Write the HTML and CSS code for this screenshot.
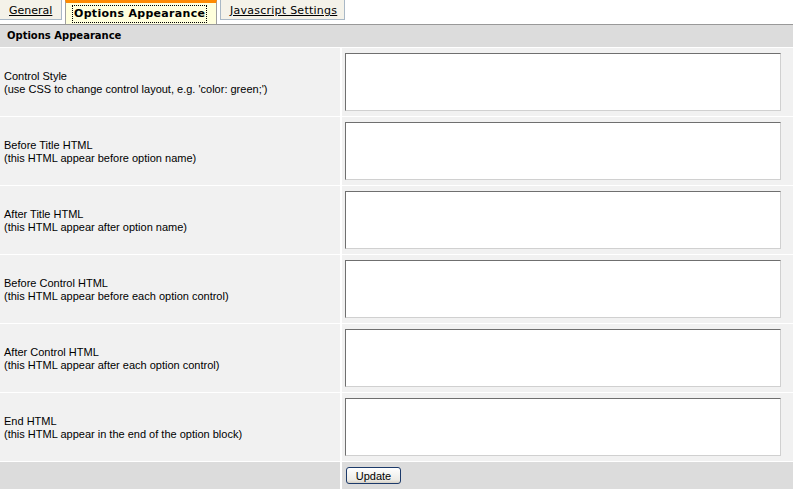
FILE: index.html
```html
<!DOCTYPE html>
<html>
<head>
<meta charset="utf-8">
<link rel="stylesheet" href="styles.css">
</head>
<body>
<div class="tabs">
  <a class="tab" href="#">General</a>
  <a class="tab active" href="#"><span class="focus">Options Appearance</span></a>
  <a class="tab" href="#">Javascript Settings</a>
</div>
<div class="panel">
  <div class="head">Options Appearance</div>
  <div class="row">
    <div class="label">Control Style<br>(use CSS to change control layout, e.g. 'color: green;')</div>
    <div class="field"><textarea class="area"></textarea></div>
  </div>
  <div class="row">
    <div class="label">Before Title HTML<br>(this HTML appear before option name)</div>
    <div class="field"><textarea class="area"></textarea></div>
  </div>
  <div class="row">
    <div class="label">After Title HTML<br>(this HTML appear after option name)</div>
    <div class="field"><textarea class="area"></textarea></div>
  </div>
  <div class="row">
    <div class="label">Before Control HTML<br>(this HTML appear before each option control)</div>
    <div class="field"><textarea class="area"></textarea></div>
  </div>
  <div class="row">
    <div class="label">After Control HTML<br>(this HTML appear after each option control)</div>
    <div class="field"><textarea class="area"></textarea></div>
  </div>
  <div class="row">
    <div class="label">End HTML<br>(this HTML appear in the end of the option block)</div>
    <div class="field"><textarea class="area"></textarea></div>
  </div>
  <div class="row foot">
    <div class="label"></div>
    <div class="field"><button class="btn" type="button">Update</button></div>
  </div>
</div>
</body>
</html>
```
FILE: styles.css
```css
html, body {
  margin: 0;
  padding: 0;
  background: #ffffff;
  font-family: "Liberation Sans", Arial, sans-serif;
  font-size: 11px;
  color: #000;
}
.tabs {
  display: flex;
  align-items: flex-start;
  height: 24px;
}
.tab {
  display: block;
  box-sizing: border-box;
  height: 20px;
  line-height: 21px;
  border: 1px solid #a9b8c6;
  border-top: none;
  background: #f4f2e9;
  color: #000;
  text-decoration: underline;
  font-family: "DejaVu Sans", Verdana, sans-serif;
  font-size: 11px;
  letter-spacing: 0.25px;
  padding: 0 8px;
  margin-right: 3px;
  white-space: nowrap;
}
.tab:first-child {
  width: 62px;
  border-left: none;
  letter-spacing: 0;
  padding-left: 9px;
}
.tab.active {
  width: 152px;
  height: 24px;
  background: #ffffdc;
  border: 1px solid #a0a0a0;
  border-top: 3px solid #ff8a00;
  border-bottom: none;
  font-weight: bold;
  padding: 3px 7px 0;
  line-height: 16px;
  letter-spacing: 0.3px;
}
.tab:last-child {
  width: 125px;
  padding-left: 9px;
}
.focus {
  display: inline-block;
  outline: 1px dotted #000;
  padding: 0 1px;
}
.panel {
  border-top: 1px solid #999;
  display: flex;
  flex-direction: column;
  gap: 1px;
  background: #fff;
}
.head {
  background: #dcdcdc;
  height: 22px;
  line-height: 22px;
  padding-left: 7px;
  font-weight: bold;
  font-family: "DejaVu Sans", Verdana, sans-serif;
  font-size: 10px;
}
.row {
  display: grid;
  grid-template-columns: 340px 1fr;
  column-gap: 2px;
  height: 68px;
}
.label {
  background: #f1f1f1;
  display: flex;
  align-items: center;
  padding: 2px 0 0 4px;
  line-height: 13px;
}
.field {
  background: #f1f1f1;
  padding: 5px 0 0 3px;
}
.area {
  display: block;
  box-sizing: border-box;
  width: 436px;
  height: 58px;
  margin: 0;
  padding: 0;
  border: 1px solid;
  border-color: #6f6f6f #d0d0d0 #d0d0d0 #6f6f6f;
  background: #fff;
  resize: none;
}
.foot {
  height: 27px;
}
.foot .label, .foot .field {
  background: #dcdcdc;
}
.foot .field {
  padding: 5px 0 0 4px;
}
.btn {
  box-sizing: border-box;
  width: 55px;
  height: 17px;
  padding: 0;
  border: 1px solid #1c3a6a;
  border-radius: 3px;
  background: linear-gradient(#ffffff, #ecebe6 80%, #d6d0c5);
  font-family: "Liberation Sans", Arial, sans-serif;
  font-size: 11px;
  color: #000;
}
```
